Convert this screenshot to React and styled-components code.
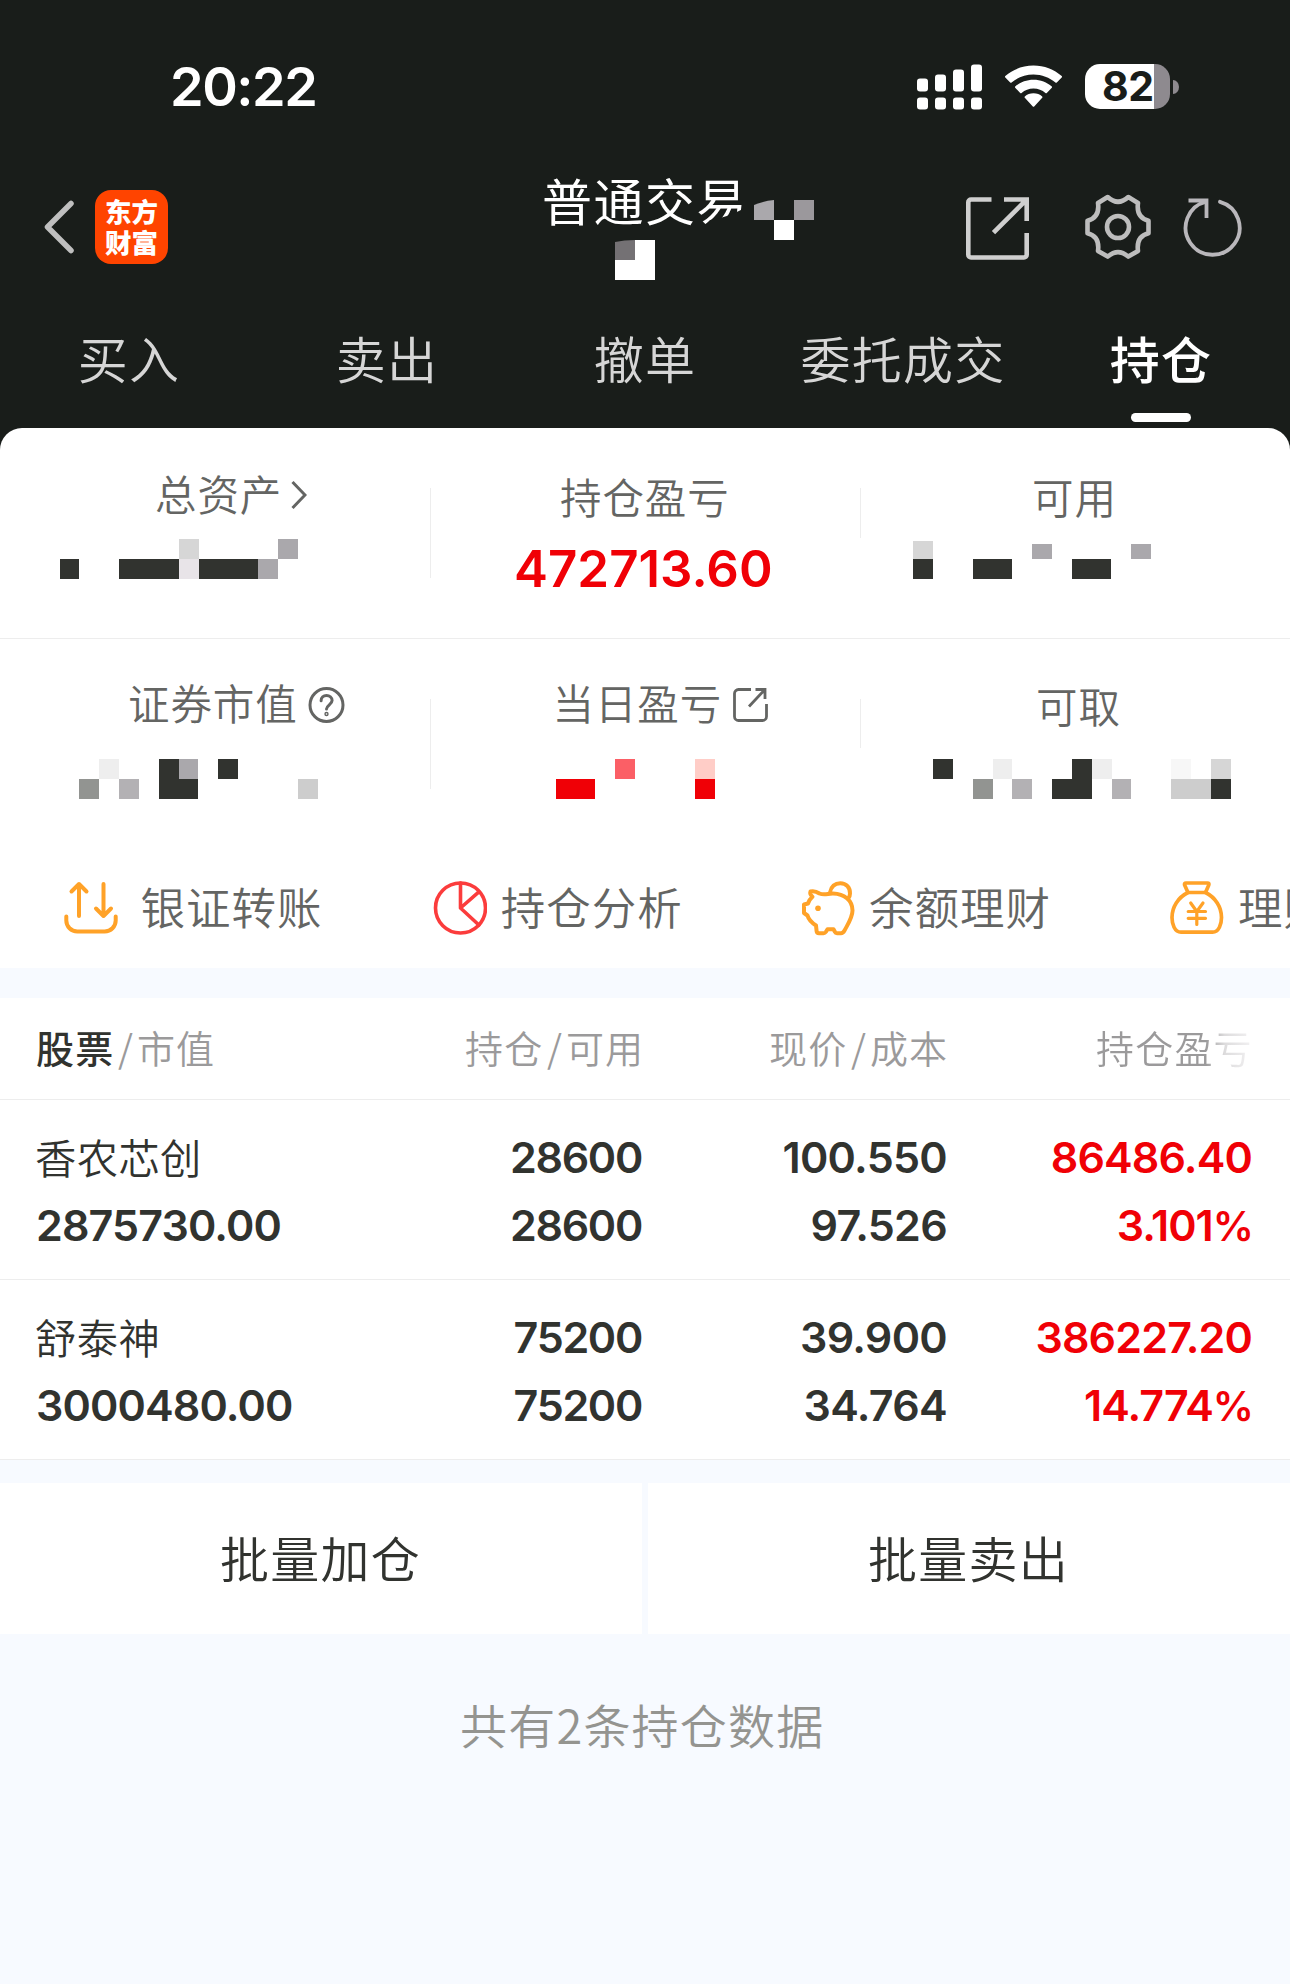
import React from "react";
import styled, { createGlobalStyle } from "styled-components";

const CJK = '"Noto Sans CJK SC", "Noto Sans", sans-serif';
const NUM = 'Inter, "Noto Sans CJK SC", sans-serif';
const CELL = 19.85;

const C = {
  night: "#191d1a",
  ink: "#31332f",
  label: "#646563",
  muted: "#9b9a9b",
  red: "#f00006",
  orange: "#ffa228",
  rose: "#fb3c3c",
  wash: "#f7faff",
  line: "#ededed",
};

const GlobalStyle = createGlobalStyle`
  * { box-sizing: border-box; }
  body { margin: 0; background: ${C.wash}; }
  svg { display: block; flex: none; }
`;

const Screen = styled.main`
  width: 1290px;
  height: 1984px;
  overflow: hidden;
  display: flex;
  flex-direction: column;
  background: ${C.wash};
  font-family: ${CJK};
`;

/* ---------- dark header ---------- */

const Header = styled.header`
  background: ${C.night};
  height: 428px;
  flex: none;
`;

const StatusBar = styled.div`
  height: 150px;
  padding: 23px 111px 0 170px;
  display: flex;
  align-items: center;
  justify-content: space-between;
`;

const Clock = styled.span`
  padding-top: 1px;
  font: 560 54px/60px ${NUM};
  letter-spacing: -1.5px;
  color: #fff;
`;

const StatusIcons = styled.div`
  display: flex;
  align-items: center;
  gap: 23px;
  height: 46px;
`;

const Battery = styled.div`
  display: flex;
  align-items: center;
  gap: 3px;
`;

const BatteryBody = styled.div`
  width: 85px;
  height: 45px;
  border-radius: 15px;
  background: linear-gradient(to right, #fff 69px, #8e8a8f 69px);
  font: 650 41px/45px ${NUM};
  letter-spacing: -0.5px;
  color: ${C.night};
  padding-left: 17px;
`;

const BatteryNub = styled.div`
  width: 6px;
  height: 14px;
  border-radius: 0 6px 6px 0 / 0 7px 7px 0;
  background: #8e8a8f;
`;

const Nav = styled.nav`
  height: 154px;
  padding-left: 44px;
  display: flex;
  align-items: center;
`;

const Logo = styled.div`
  width: 73px;
  height: 74px;
  margin-left: 21px;
  border-radius: 16px;
  background: #ff4400;
  color: #fff;
  font: 800 26.5px/31px ${CJK};
  text-align: center;
  padding-top: 5px;
`;

const TitleBox = styled.div`
  position: relative;
  align-self: flex-start;
  width: 424px;
  height: 154px;
  margin-left: 374px;
  padding-top: 19px;
`;

const Title = styled.h1`
  margin: 0;
  font: 400 50px/60px ${CJK};
  letter-spacing: 1.5px;
  color: #fff;
`;

const TitleMask = styled.svg`
  position: absolute;
  left: 0;
  top: 0;
`;

const NavIcons = styled.div`
  display: flex;
  align-items: center;
`;

const ShareSlot = styled.div`
  padding-top: 3px;
`;

const GearSlot = styled.div`
  margin: 0 32.5px 0 55.5px;
`;

const Tabs = styled.div`
  height: 124px;
  display: grid;
  grid-template-columns: repeat(5, 1fr);
`;

const Tab = styled.div`
  display: flex;
  flex-direction: column;
  align-items: center;
  padding-top: 23px;
  font: ${(p) => (p.$active ? 500 : 350)} 50px/60px ${CJK};
  letter-spacing: 1.3px;
  white-space: nowrap;
  color: ${(p) => (p.$active ? "#fff" : "#d6d6d6")};
`;

const TabBar = styled.div`
  width: 60px;
  height: 9px;
  margin-top: 26px;
  border-radius: 4.5px;
  background: #fff;
`;

/* ---------- asset summary ---------- */

const SheetTop = styled.div`
  background: ${C.night};
`;

const Summary = styled.section`
  background: #fff;
  border-radius: 22px 22px 0 0;
  height: 540px;
`;

const StatRow = styled.div`
  display: flex;
  height: 211px;
  border-bottom: ${(p) => (p.$last ? "none" : `1px solid ${C.line}`)};
`;

const Stat = styled.div`
  width: ${(p) => p.$w}px;
  display: flex;
  flex-direction: column;
`;

const Divider = styled.div`
  width: 1px;
  height: ${(p) => p.$h}px;
  margin-top: 60px;
  background: ${C.line};
`;

const StatLabel = styled.div`
  display: flex;
  align-items: flex-start;
  margin-left: ${(p) => p.$x}px;
  padding-top: ${(p) => p.$top}px;
  height: 111px;
  gap: ${(p) => p.$gap || 0}px;
  font: 350 41.5px/50px ${CJK};
  letter-spacing: 0.9px;
  white-space: nowrap;
  color: ${C.label};
`;

const IconDrop = styled.span`
  padding-top: ${(p) => p.$t}px;
`;

const Profit = styled.div`
  margin: 0 0 0 83px;
  font: 560 51px/60px ${NUM};
  letter-spacing: 0;
  color: ${C.red};
`;

const Mosaic = styled.div`
  display: grid;
  grid-template-columns: repeat(20, ${CELL}px);
  grid-template-rows: 20px 20px;
  margin-left: ${(p) => p.$x}px;
  margin-top: ${(p) => p.$y || 0}px;
`;

const Pixel = styled.i`
  grid-column: ${(p) => p.$c + 1} / span ${(p) => p.$w};
  grid-row: ${(p) => p.$r + 1};
  background: ${(p) => p.$color};
  margin-top: ${(p) => p.$cut || 0}px;
`;

const Tools = styled.div`
  display: flex;
  height: 119px;
  padding-left: 64px;
  overflow: hidden;
`;

const Tool = styled.div`
  flex: none;
  width: 368.7px;
  display: flex;
  gap: ${(p) => p.$gap}px;
  padding-top: 31px;
  font: 350 44.5px/50px ${CJK};
  letter-spacing: 1px;
  white-space: nowrap;
  color: ${C.label};
`;

/* ---------- positions ---------- */

const Table = styled.section`
  margin-top: 30px;
  background: #fff;
`;

const HeadRow = styled.div`
  display: grid;
  grid-template-columns: 342px 300px 305px 305px;
  padding-left: 36px;
  padding-right: 2px;
  height: 102px;
  border-bottom: 1px solid ${C.line};
  font: 350 38px/97px ${CJK};
  letter-spacing: 1.2px;
  color: ${C.muted};
  white-space: nowrap;
`;

const HeadCell = styled.div`
  padding-left: ${(p) => p.$x}px;
  display: flex;
`;

const Strong = styled.span`
  font-weight: 500;
  color: ${C.ink};
`;

const Slash = styled.span`
  width: 22.5px;
  padding-left: 1px;
  text-align: center;
`;

const Fade = styled.span`
  background: linear-gradient(to right, ${C.muted} 70%, #dddcdd 82%, #f3f2f3 100%);
  background-clip: text;
  color: transparent;
`;

const Position = styled.div`
  display: grid;
  grid-template-columns: 306px 300px 305px 305px;
  grid-template-rows: 68px 68px;
  padding: 24px 0 0 36px;
  height: 180px;
  border-bottom: 1px solid ${C.line};
`;

const Name = styled.div`
  font: 350 41.3px/65px ${CJK};
  letter-spacing: 0.4px;
  color: ${C.ink};
  margin-left: -1px;
`;

const Num = styled.div`
  font: 560 43px/67px ${NUM};
  letter-spacing: ${(p) => p.$track ?? -0.85}px;
  text-align: ${(p) => (p.$left ? "left" : "right")};
  color: ${(p) => (p.$up ? C.red : C.ink)};
`;

const Percent = styled.span`
  font-size: 41px;
  letter-spacing: -2px;
`;

const Batch = styled.div`
  display: grid;
  grid-template-columns: 642px 642px;
  gap: 6px;
  margin-top: 23px;
`;

const BatchButton = styled.button`
  height: 151px;
  border: 0;
  padding: 0 1px 4px 0;
  background: #fff;
  color: ${C.ink};
  font: 350 49px/60px ${CJK};
  letter-spacing: 1.2px;
`;

const Footnote = styled.p`
  margin: 60px 0 0 460px;
  font: 350 47px/60px ${CJK};
  letter-spacing: 1.2px;
  color: #949490;
`;

/* ---------- drawings ---------- */

const Signal = () => (
  <svg width="65" height="46" viewBox="0 0 65 46" fill="#fff">
    {[[0, 14.5], [18, 10.5], [36, 5.5], [54, 0.5]].map(([x, y]) => (
      <g key={x}>
        <rect x={x} y={y} width="11" height={27.5 - y} rx="3" />
        <rect x={x} y="33.5" width="11" height="12" rx="3" />
      </g>
    ))}
  </svg>
);

const Wifi = () => (
  <svg width="57" height="43" viewBox="0 0 57 43" fill="#fff">
    <path d="M0.3 12.4a1 1 0 0 1 0-1.4C8 4.4 17.8 0.5 28.5 0.5S49 4.4 56.7 11a1 1 0 0 1 0 1.4L51.8 17.5a1 1 0 0 1-1.4 0C44.5 12.5 36.8 9.5 28.5 9.5S12.5 12.5 6.6 17.5a1 1 0 0 1-1.4 0Z" />
    <path d="M10.2 22.8a1 1 0 0 1 0-1.4C15 17.2 21.5 14.7 28.5 14.7s13.5 2.5 18.3 6.7a1 1 0 0 1 0 1.4l-5 5.1a1 1 0 0 1-1.4 0c-3.2-2.7-7.3-4.3-11.9-4.3s-8.7 1.6-11.9 4.3a1 1 0 0 1-1.4 0Z" />
    <path d="M19.8 32.8a1 1 0 0 1 0-1.4c2.3-1.9 5.3-3.1 8.7-3.1s6.4 1.2 8.7 3.1a1 1 0 0 1 0 1.4L29.2 41.5a1 1 0 0 1-1.4 0Z" />
  </svg>
);

const Back = () => (
  <svg width="30" height="54" viewBox="0 0 30 54" fill="none" stroke="#bfbfbf" strokeWidth="5.5" strokeLinecap="round" strokeLinejoin="round">
    <path d="M27 3.5L3.5 27 27 50.5" />
  </svg>
);

const Share = () => (
  <svg width="63" height="63" viewBox="0 0 63 63" fill="none" stroke="#cfcfcf" strokeWidth="4.6">
    <path d="M25.5 2.5H5a2.7 2.7 0 0 0-2.7 2.7v52.6A2.7 2.7 0 0 0 5 60.5h53a2.7 2.7 0 0 0 2.7-2.7V36" />
    <path d="M38 2.5h22.7v21.5M60 3.2L27.5 35.7" />
  </svg>
);

const Gear = () => (
  <svg width="66" height="66" viewBox="-33 -33 66 66" fill="none" stroke="#bdbdbd" strokeWidth="4.6" strokeLinejoin="round">
    <circle r="11" />
    <path d="M-10.3 -30L-20 -24Q-18 -9.5 -30.5 -6.3V6.3Q-18 9.5 -20 24L-10.3 29.6Q0 20.5 10.3 29.6L20 24Q18 9.5 30.5 6.3V-6.3Q18 -9.5 20 -24L10.3 -30Q0 -20.5 -10.3 -30Z" />
  </svg>
);

const Refresh = () => (
  <svg width="60" height="60" viewBox="0 0 60 60" fill="none" stroke="#b9b7bb" strokeWidth="3.8">
    <path d="M37 4.8A27 27 0 1 1 23 4.6" strokeLinecap="round" />
    <path d="M5.500 3.500H23.500V21" />
  </svg>
);

const Chevron = () => (
  <svg width="16" height="34" viewBox="0 0 16 34" fill="none" stroke={C.label} strokeWidth="3">
    <path d="M1.500 4L14 17 1.500 30" />
  </svg>
);

const Help = () => (
  <svg width="38" height="38" viewBox="0 0 38 38" fill="none" stroke={C.label} strokeWidth="3" strokeLinecap="round">
    <circle cx="18.500" cy="19" r="16.500" />
    <path d="M13.100 14.800C13.100 11.500 15.500 9.600 18.500 9.600s5.600 1.900 5.600 5c0 3.800-5.600 4.600-5.600 8.400" />
    <circle cx="18.500" cy="28" r="0.700" />
  </svg>
);

const Open = () => (
  <svg width="36" height="36" viewBox="0 0 36 36" fill="none" stroke={C.label} strokeWidth="2.800">
    <path d="M19 2.500H6.500a4 4 0 0 0-4 4v23a4 4 0 0 0 4 4h24a4 4 0 0 0 4-4V17" />
    <path d="M23.500 2.500h9.500V12M32.500 3L17 19.500" />
  </svg>
);

const toolSvg = { width: 54, height: 56, viewBox: "0 0 54 56", fill: "none", strokeLinecap: "round", strokeLinejoin: "round" };

const Transfer = () => (
  <svg {...toolSvg} stroke={C.orange} strokeWidth="4">
    <path d="M15 35V3M7.500 10.500L15 3l7.500 7.500M39.500 3v32M32 27.500l7.500 7.500 7.500-7.500" />
    <path d="M2.300 35.500v4a11 11 0 0 0 11 11h27.400a11 11 0 0 0 11-11v-4" />
  </svg>
);

const Pie = () => (
  <svg {...toolSvg} stroke={C.rose} strokeWidth="3.600">
    <circle cx="27.500" cy="27" r="25" />
    <path d="M27.500 2v25l18.400 17M27.500 27L45.900 10.800" />
  </svg>
);

const Piggy = () => (
  <svg {...toolSvg} viewBox="-1 0 54 56" stroke={C.orange} strokeWidth="4">
    <path d="M8.500 10.500C11 9.800 14.500 10.500 17.500 12.500C22 14.500 26 12.500 31 12.600C42 13 50.500 19 50.500 29.500C50.500 36.500 46 43 42.500 49.500Q41 52.200 39 52.200H35Q33.500 52.200 33 51L31.500 48.200H25.500L23.800 51Q23 52.200 21.500 52.200H17Q14.800 52.200 14.600 50L14 44.500C9.500 41.500 6.500 38.500 5.500 34.500L2 32V23.500L6 22.500C7 19.500 8.500 17.500 10.500 15.800Q7.500 13.500 8.500 10.500Z" />
    <path d="M28 11.500C29 5.500 33 2.200 38.300 2.200C44.300 2.200 48.200 6.500 48 12.500Q48 15 46.500 17" />
    <circle cx="16" cy="27.300" r="2.800" fill={C.orange} stroke="none" />
  </svg>
);

const MoneyBag = () => (
  <svg {...toolSvg} stroke={C.orange} strokeWidth="3.700">
    <path d="M16 2H37.500Q39.500 2 38.800 4L35.500 11.500H18L14.600 4Q14 2 16 2Z" />
    <path d="M18 11.500C8 16.500 2 26 2 36.500C2 43 4.500 51.200 11 51.200H42.500C49 51.200 51.500 43 51.500 36.500C51.500 26 45.500 16.500 35.500 11.500" />
    <path d="M20.700 22L26.800 30.500 33 22M26.800 30.500V43.500M18.200 30.500H35.500M18.200 37.300H35.500" strokeWidth="3.200" />
  </svg>
);

/* ---------- data ---------- */

const K = C.ink;
const ASSETS = [[0, 1, 1, K], [3, 1, 3, K], [6, 0, 1, "#d6d6d6"], [6, 1, 1, "#e8e4e8"], [7, 1, 3, K], [10, 1, 1, "#aaa8ac"], [11, 0, 1, "#aaa8ac"]];
const USABLE = [[0, 0, 1, "#d6d6d6", 2], [0, 1, 1, K], [3, 1, 2, K], [6, 0, 1, "#aaa8ac", 5], [8, 1, 2, K], [11, 0, 1, "#aaa8ac", 5]];
const MARKET = [[1, 0, 1, "#eeeeee"], [0, 1, 1, "#929491"], [2, 1, 1, "#b3b1b4"], [4, 0, 1, K], [4, 1, 2, K], [5, 0, 1, "#aaa8ac"], [7, 0, 1, K], [11, 1, 1, "#cdcdcd"]];
const TODAY = [[0, 1, 2, C.red], [3, 0, 1, "#fb5f66"], [7, 0, 1, "#ffcdc7"], [7, 1, 1, C.red]];
const CASH = [[0, 0, 1, K], [2, 1, 1, "#929491"], [3, 0, 1, "#eeeeee"], [4, 1, 1, "#b3b1b4"], [6, 1, 2, K], [7, 0, 1, K], [8, 0, 1, "#eeeeee"], [9, 1, 1, "#b3b1b4"], [12, 0, 1, "#f7f7f7"], [12, 1, 2, "#cdcdcd"], [14, 0, 1, "#d6d6d6"], [14, 1, 1, K]];

const Hidden = ({ cells, x, y }) => (
  <Mosaic $x={x} $y={y}>
    {cells.map(([c, r, w, color, cut], i) => (
      <Pixel key={i} $c={c} $r={r} $w={w} $color={color} $cut={cut} />
    ))}
  </Mosaic>
);

const POSITIONS = [
  { name: "香农芯创", value: "2875730.00", held: "28600", usable: "28600", price: "100.550", cost: "97.526", gain: "86486.40", rate: "3.101" },
  { name: "舒泰神", value: "3000480.00", held: "75200", usable: "75200", price: "39.900", cost: "34.764", gain: "386227.20", rate: "14.774" },
];

const TOOLS = [
  ["银证转账", Transfer, 22.5],
  ["持仓分析", Pie, 14],
  ["余额理财", Piggy, 13.5],
  ["理财", MoneyBag, 14],
];

export default function App() {
  return (
    <Screen>
      <GlobalStyle />
      <Header>
        <StatusBar>
          <Clock>20:22</Clock>
          <StatusIcons>
            <Signal />
            <Wifi />
            <Battery>
              <BatteryBody>82</BatteryBody>
              <BatteryNub />
            </Battery>
          </StatusIcons>
        </StatusBar>
        <Nav>
          <Back />
          <Logo>东方<br />财富</Logo>
          <TitleBox>
            <Title>普通交易</Title>
            <TitleMask width="300" height="154" viewBox="0 0 300 154">
              <path d="M158 80L168 70Q184 68 201 59V82H158Z" fill={C.night} />
              <path d="M212 55Q221 51 232 50V70H212Z" fill="#aaa8ac" />
              <rect x="252" y="50" width="20" height="20" fill="#9b989c" />
              <rect x="232" y="70" width="20" height="20" fill="#fff" />
              <rect x="73" y="90" width="40" height="40" fill="#fff" />
              <rect x="73" y="90" width="20" height="20" fill="#747174" />
              <path d="M73 89V92Q82 90 93 90V89Z" fill={C.night} />
            </TitleMask>
          </TitleBox>
          <NavIcons>
            <ShareSlot><Share /></ShareSlot>
            <GearSlot><Gear /></GearSlot>
            <Refresh />
          </NavIcons>
        </Nav>
        <Tabs>
          {["买入", "卖出", "撤单", "委托成交"].map((t) => <Tab key={t}>{t}</Tab>)}
          <Tab $active>持仓<TabBar /></Tab>
        </Tabs>
      </Header>

      <SheetTop>
        <Summary>
          <StatRow>
            <Stat $w={430}>
              <StatLabel $x={155} $top={40} $gap={9}>
                总资产<IconDrop $t={10}><Chevron /></IconDrop>
              </StatLabel>
              <Hidden cells={ASSETS} x={59.6} />
            </Stat>
            <Divider $h={90} />
            <Stat $w={429}>
              <StatLabel $x={129} $top={43}>持仓盈亏</StatLabel>
              <Profit>472713.60</Profit>
            </Stat>
            <Divider $h={50} />
            <Stat $w={429}>
              <StatLabel $x={171} $top={43}>可用</StatLabel>
              <Hidden cells={USABLE} x={52} />
            </Stat>
          </StatRow>
          <StatRow $last>
            <Stat $w={430}>
              <StatLabel $x={128} $top={38} $gap={10}>
                证券市值<IconDrop $t={9}><Help /></IconDrop>
              </StatLabel>
              <Hidden cells={MARKET} x={79.4} y={9} />
            </Stat>
            <Divider $h={90} />
            <Stat $w={429}>
              <StatLabel $x={121.5} $top={38} $gap={10}>
                当日盈亏<IconDrop $t={10}><Open /></IconDrop>
              </StatLabel>
              <Hidden cells={TODAY} x={124.8} y={9} />
            </Stat>
            <Divider $h={49} />
            <Stat $w={429}>
              <StatLabel $x={175} $top={41}>可取</StatLabel>
              <Hidden cells={CASH} x={72} y={9} />
            </Stat>
          </StatRow>
          <Tools>
            {TOOLS.map(([label, Icon, gap]) => (
              <Tool key={label} $gap={gap}><Icon />{label}</Tool>
            ))}
          </Tools>
        </Summary>
      </SheetTop>

      <Table>
        <HeadRow>
          <HeadCell $x={0}><Strong>股票</Strong><Slash>/</Slash>市值</HeadCell>
          <HeadCell $x={87}>持仓<Slash>/</Slash>可用</HeadCell>
          <HeadCell $x={91}>现价<Slash>/</Slash>成本</HeadCell>
          <HeadCell $x={113}><Fade>持仓盈亏</Fade></HeadCell>
        </HeadRow>
        {POSITIONS.map((p) => (
          <Position key={p.name}>
            <Name>{p.name}</Name>
            <Num $track={-1.3}>{p.held}</Num>
            <Num $track={-0.7}>{p.price}</Num>
            <Num $up>{p.gain}</Num>
            <Num $left>{p.value}</Num>
            <Num $track={-1.3}>{p.usable}</Num>
            <Num $track={-0.7}>{p.cost}</Num>
            <Num $up $track={-1}>{p.rate}<Percent>%</Percent></Num>
          </Position>
        ))}
      </Table>

      <Batch>
        <BatchButton>批量加仓</BatchButton>
        <BatchButton>批量卖出</BatchButton>
      </Batch>
      <Footnote>共有2条持仓数据</Footnote>
    </Screen>
  );
}
